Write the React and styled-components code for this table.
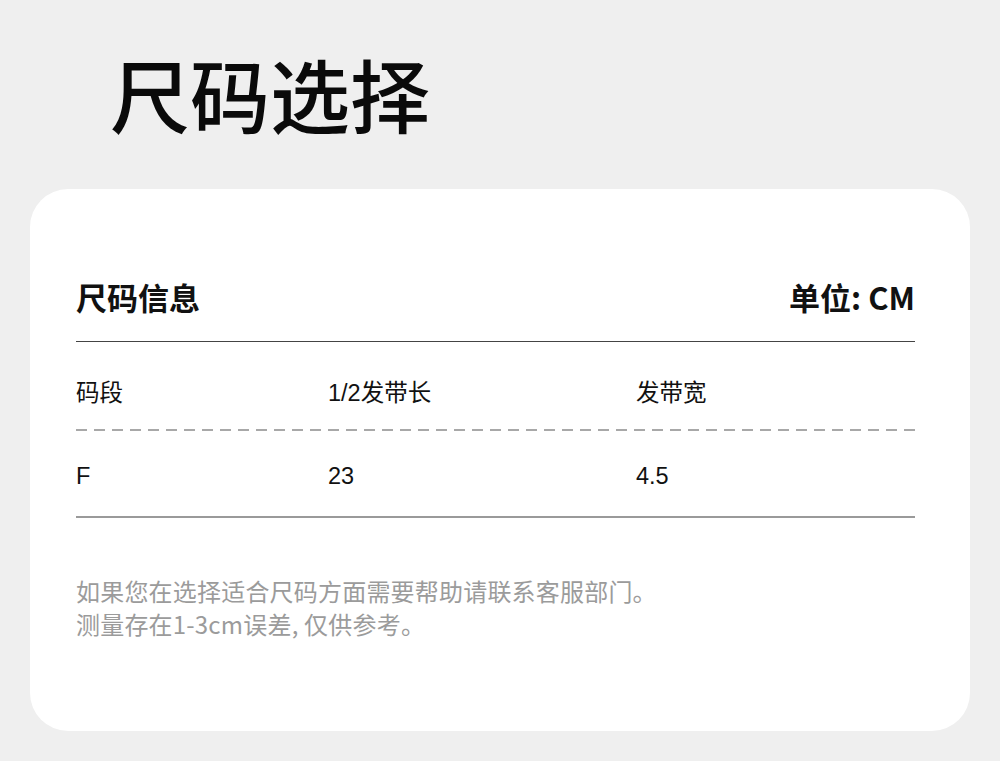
import React from "react";
import styled, { createGlobalStyle } from "styled-components";

const Global = createGlobalStyle`
  html, body { margin: 0; padding: 0; background: #efefef; }
  body { font-family: "Noto Sans CJK SC", "Noto Sans", sans-serif; color: #111; }
`;

const Page = styled.div`
  width: 1000px;
  height: 761px;
  box-sizing: border-box;
  padding: 52px 30px 0 30px;
  display: flex;
  flex-direction: column;
`;

const Title = styled.h1`
  margin: 0 0 0 80px;
  font-size: 80px;
  line-height: 80px;
  font-weight: 500;
  letter-spacing: 0;
  color: #0a0a0a;
`;

const Card = styled.section`
  margin-top: 57px;
  height: 542px;
  background: #fff;
  border-radius: 38px;
  box-sizing: border-box;
  padding: 91px 55px 0 46px;
  display: flex;
  flex-direction: column;
`;

const HeadRow = styled.div`
  display: flex;
  justify-content: space-between;
  align-items: center;
  height: 34px;
  padding-bottom: 27px;
  border-bottom: 1.5px solid #444;
`;

const HeadText = styled.div`
  font-size: 31px;
  font-weight: 700;
  line-height: 34px;
  color: #111;
`;

const Row = styled.div`
  display: grid;
  grid-template-columns: 252px 308px 1fr;
  align-items: start;
  box-sizing: border-box;
  height: ${(p) => p.$h}px;
  padding-top: ${(p) => p.$top}px;
`;

const Cell = styled.div`
  font-family: "Liberation Sans", "Noto Sans CJK SC", sans-serif;
  font-size: 23.5px;
  line-height: 26px;
  color: #111;
`;

const Dashed = styled.div`
  height: 2px;
  background-image: linear-gradient(to right, #a8a8a8 11px, transparent 11px);
  background-size: 18px 2px;
  background-repeat: repeat-x;
`;

const Solid = styled.div`
  height: 1.5px;
  background: #9a9a9a;
`;

const Notes = styled.div`
  margin-top: 56px;
  display: flex;
  flex-direction: column;
`;

const Note = styled.p`
  margin: 0;
  font-size: 24px;
  line-height: 33px;
  color: #9b9b9b;
  letter-spacing: 0.2px;
`;

export default function App() {
  return (
    <>
      <Global />
      <Page>
        <Title>尺码选择</Title>
        <Card>
          <HeadRow>
            <HeadText>尺码信息</HeadText>
            <HeadText>单位: CM</HeadText>
          </HeadRow>
          <Row $h={87} $top={38}>
            <Cell>码段</Cell>
            <Cell>1/2发带长</Cell>
            <Cell>发带宽</Cell>
          </Row>
          <Dashed />
          <Row $h={85} $top={32}>
            <Cell>F</Cell>
            <Cell>23</Cell>
            <Cell>4.5</Cell>
          </Row>
          <Solid />
          <Notes>
            <Note>如果您在选择适合尺码方面需要帮助请联系客服部门。</Note>
            <Note>测量存在1-3cm误差, 仅供参考。</Note>
          </Notes>
        </Card>
      </Page>
    </>
  );
}
